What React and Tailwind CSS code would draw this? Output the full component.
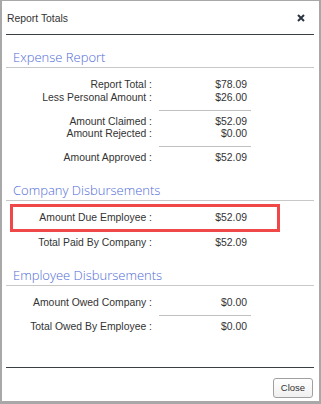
import React from 'react';

function Row({ label, value, className = '', labelW = 'w-[146px]' }) {
    return (
        <div className={`flex h-[12px] leading-[12px] text-[10.4px] text-[#333] ${className}`}>
            <div className={`${labelW} text-right whitespace-nowrap`}>{label} :</div>
            <div className="w-[95px] text-right">{value}</div>
        </div>
    );
}

function Heading({ children, className = '' }) {
    return (
        <div
            className={`h-[21px] border-b border-[#c8c8c8] pl-[7px] text-[13px] leading-[20px] font-light text-[#4f6bd6] ${className}`}
            style={{ fontFamily: '"Open Sans", sans-serif' }}
        >
            {children}
        </div>
    );
}

function Sep({ className = '' }) {
    return <div className={`ml-[153px] w-[92px] h-px bg-[#c0c0c0] ${className}`}></div>;
}

function App() {
    return (
        <div
            className="w-[321px] h-[404px] flex flex-col bg-white border-[#a8a8a8] border-l-2 border-r-2 border-t border-b-[3px] pl-[4px] pr-[5px]"
            style={{ fontFamily: '"Liberation Sans", Arial, sans-serif' }}
        >
            {/* Header */}
            <div className="h-[34px] flex items-start justify-between border-b border-[#3a3f44] pt-[11px]">
                <span className="pl-[1px] text-[10.4px] leading-[14px] text-[#333]">Report Totals</span>
                <svg width="8" height="8" viewBox="0 0 8 8" className="mt-[2px] mr-[9px]">
                    <path d="M1 1 L7 7 M7 1 L1 7" stroke="#2b3440" strokeWidth="2" />
                </svg>
            </div>

            <div className="flex-1">
                {/* Expense Report */}
                <Heading className="mt-[12px]">Expense Report</Heading>
                <Row label="Report Total" value="$78.09" className="mt-[11px]" />
                <Row label="Less Personal Amount" value="$26.00" className="mt-px" />
                <Sep className="mt-[6px]" />
                <Row label="Amount Claimed" value="$52.09" className="mt-[5px]" />
                <Row label="Amount Rejected" value="$0.00" />
                <Sep className="mt-[6px]" />
                <Row label="Amount Approved" value="$52.09" className="mt-[5px]" />

                {/* Company Disbursements */}
                <Heading className="mt-[16px]">Company Disbursements</Heading>
                <div className="mt-[3px] ml-[4px] w-[270px] border-[3px] border-[#f04848] pt-[5px] pb-[5px]">
                    <Row label="Amount Due Employee" value="$52.09" labelW="w-[139px]" />
                </div>
                <Row label="Total Paid By Company" value="$52.09" className="mt-[5px]" />

                {/* Employee Disbursements */}
                <Heading className="mt-[16px]">Employee Disbursements</Heading>
                <Row label="Amount Owed Company" value="$0.00" className="mt-[11px]" />
                <Sep className="mt-[6px]" />
                <Row label="Total Owed By Employee" value="$0.00" className="mt-[5px]" />
            </div>

            {/* Footer */}
            <div className="h-[34px] border-t border-[#3a3f44] flex justify-end items-start pt-[10px]">
                <button className="w-[40px] h-[20px] mr-[1px] rounded-[3px] border border-[#a0a0a0] bg-gradient-to-b from-white to-[#f0f0f0] text-[9.5px] leading-[18px] text-[#333]">
                    Close
                </button>
            </div>
        </div>
    );
}

export default App;
